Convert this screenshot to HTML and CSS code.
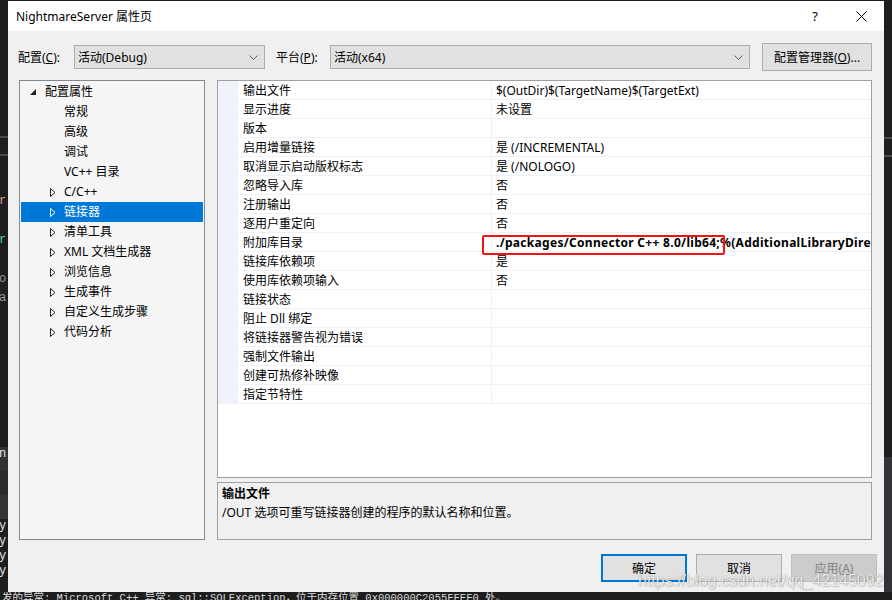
FILE: index.html
```html
<!DOCTYPE html>
<html>
<head>
<meta charset="utf-8">
<title>NightmareServer 属性页</title>
<link rel="stylesheet" href="styles.css">
</head>
<body>
<div class="screen">
  <div class="topline"></div>
  <div class="middle">
    <div class="edge">
      <div class="eb h136"></div>
      <div class="eline"></div>
      <div class="eb h16"></div>
      <div class="eline"></div>
      <div class="eb h38"></div>
      <div class="ech c-orange">r</div>
      <div class="eb h24"></div>
      <div class="ech c-teal">r</div>
      <div class="eb h24"></div>
      <div class="ech c-grey">o</div>
      <div class="eb h4"></div>
      <div class="ech c-grey">a</div>
      <div class="eb h141"></div>
      <div class="eband light"><span class="ech c-white">n</span></div>
      <div class="eband mid"></div>
      <div class="eband light"></div>
      <div class="ech c-white">y</div>
      <div class="ech c-white">y</div>
      <div class="ech c-white">y</div>
      <div class="ech c-white">y</div>
    </div>

    <div class="dialog">
      <div class="titlebar">
        <div class="title">NightmareServer 属性页</div>
        <div class="tb-btn help">?</div>
        <div class="tb-btn close">
          <svg width="11" height="11" viewBox="0 0 11 11"><path d="M0.5 0.5L10.5 10.5M10.5 0.5L0.5 10.5" stroke="#000" stroke-width="1" fill="none"/></svg>
        </div>
      </div>

      <div class="config">
        <div class="lbl lbl-conf">配置(<u>C</u>):</div>
        <div class="combo combo-conf">
          <span class="combo-text">活动(Debug)</span>
          <svg class="chev" width="9" height="5" viewBox="0 0 9 5"><path d="M0.5 0.5L4.5 4.5L8.5 0.5" stroke="#5a5a5a" fill="none"/></svg>
        </div>
        <div class="lbl lbl-plat">平台(<u>P</u>):</div>
        <div class="combo combo-plat">
          <span class="combo-text">活动(x64)</span>
          <svg class="chev" width="9" height="5" viewBox="0 0 9 5"><path d="M0.5 0.5L4.5 4.5L8.5 0.5" stroke="#5a5a5a" fill="none"/></svg>
        </div>
        <div class="btn btn-mgr">配置管理器(<u>O</u>)...</div>
      </div>

      <div class="main">
        <div class="tree">
          <div class="node lv0">
            <span class="exp"><svg width="6" height="6" viewBox="0 0 6 6"><polygon points="6,0 6,6 0,6" fill="#1e1e1e"/></svg></span>配置属性
          </div>
          <div class="node lv1"><span class="exp"></span>常规</div>
          <div class="node lv1"><span class="exp"></span>高级</div>
          <div class="node lv1"><span class="exp"></span>调试</div>
          <div class="node lv1"><span class="exp"></span>VC++ 目录</div>
          <div class="node lv1"><span class="exp"><svg class="tri" width="6" height="9" viewBox="0 0 6 9"><polygon points="0.5,0.5 5,4.5 0.5,8.5" fill="none" stroke="#1e1e1e"/></svg></span>C/C++</div>
          <div class="node lv1 sel"><span class="exp"><svg class="tri" width="6" height="9" viewBox="0 0 6 9"><polygon points="0.5,0.5 5,4.5 0.5,8.5" fill="none" stroke="#fff"/></svg></span>链接器</div>
          <div class="node lv1"><span class="exp"><svg class="tri" width="6" height="9" viewBox="0 0 6 9"><polygon points="0.5,0.5 5,4.5 0.5,8.5" fill="none" stroke="#1e1e1e"/></svg></span>清单工具</div>
          <div class="node lv1"><span class="exp"><svg class="tri" width="6" height="9" viewBox="0 0 6 9"><polygon points="0.5,0.5 5,4.5 0.5,8.5" fill="none" stroke="#1e1e1e"/></svg></span>XML 文档生成器</div>
          <div class="node lv1"><span class="exp"><svg class="tri" width="6" height="9" viewBox="0 0 6 9"><polygon points="0.5,0.5 5,4.5 0.5,8.5" fill="none" stroke="#1e1e1e"/></svg></span>浏览信息</div>
          <div class="node lv1"><span class="exp"><svg class="tri" width="6" height="9" viewBox="0 0 6 9"><polygon points="0.5,0.5 5,4.5 0.5,8.5" fill="none" stroke="#1e1e1e"/></svg></span>生成事件</div>
          <div class="node lv1"><span class="exp"><svg class="tri" width="6" height="9" viewBox="0 0 6 9"><polygon points="0.5,0.5 5,4.5 0.5,8.5" fill="none" stroke="#1e1e1e"/></svg></span>自定义生成步骤</div>
          <div class="node lv1"><span class="exp"><svg class="tri" width="6" height="9" viewBox="0 0 6 9"><polygon points="0.5,0.5 5,4.5 0.5,8.5" fill="none" stroke="#1e1e1e"/></svg></span>代码分析</div>
        </div>

        <div class="right">
          <div class="grid">
            <div class="row"><div class="gut"></div><div class="name">输出文件</div><div class="val">$(OutDir)$(TargetName)$(TargetExt)</div></div>
            <div class="row"><div class="gut"></div><div class="name">显示进度</div><div class="val">未设置</div></div>
            <div class="row"><div class="gut"></div><div class="name">版本</div><div class="val"></div></div>
            <div class="row"><div class="gut"></div><div class="name">启用增量链接</div><div class="val">是 (/INCREMENTAL)</div></div>
            <div class="row"><div class="gut"></div><div class="name">取消显示启动版权标志</div><div class="val">是 (/NOLOGO)</div></div>
            <div class="row"><div class="gut"></div><div class="name">忽略导入库</div><div class="val">否</div></div>
            <div class="row"><div class="gut"></div><div class="name">注册输出</div><div class="val">否</div></div>
            <div class="row"><div class="gut"></div><div class="name">逐用户重定向</div><div class="val">否</div></div>
            <div class="row"><div class="gut"></div><div class="name">附加库目录</div><div class="val bold">./packages/Connector C++ 8.0/lib64;%(AdditionalLibraryDirectories)</div><div class="redbox"></div></div>
            <div class="row"><div class="gut"></div><div class="name">链接库依赖项</div><div class="val">是</div></div>
            <div class="row"><div class="gut"></div><div class="name">使用库依赖项输入</div><div class="val">否</div></div>
            <div class="row"><div class="gut"></div><div class="name">链接状态</div><div class="val"></div></div>
            <div class="row"><div class="gut"></div><div class="name">阻止 Dll 绑定</div><div class="val"></div></div>
            <div class="row"><div class="gut"></div><div class="name">将链接器警告视为错误</div><div class="val"></div></div>
            <div class="row"><div class="gut"></div><div class="name">强制文件输出</div><div class="val"></div></div>
            <div class="row"><div class="gut"></div><div class="name">创建可热修补映像</div><div class="val"></div></div>
            <div class="row"><div class="gut"></div><div class="name">指定节特性</div><div class="val"></div></div>
          </div>
          <div class="desc">
            <div class="desc-title">输出文件</div>
            <div class="desc-text">/OUT 选项可重写链接器创建的程序的默认名称和位置。</div>
          </div>
        </div>
      </div>

      <div class="footer">
        <div class="btn btn-ok">确定</div>
        <div class="btn">取消</div>
        <div class="btn btn-dis">应用(<u>A</u>)</div>
      </div>

      <div class="watermark">https://blog.csdn.net/qq_42145092</div>
    </div>

    <div class="edge edge-r">
      <div class="eb h137"></div>
      <div class="eline"></div>
      <div class="eb h16"></div>
      <div class="eline"></div>
      <div class="eb h300"></div>
      <div class="eband light tall"></div>
    </div>
  </div>
  <div class="console">发的异常: Microsoft C++ 异常: sql::SQLException，位于内存位置 0x000000C2055FFEF0 处。</div>
</div>
</body>
</html>
```

FILE: styles.css
```css
* { box-sizing: border-box; margin: 0; padding: 0; }

html, body { width: 892px; height: 600px; overflow: hidden; }

body {
  background: #1e1e1e;
  font-family: "Segoe UI", "Noto Sans", "Noto Sans CJK SC", sans-serif;
  font-size: 12px;
  color: #000;
}

.screen { display: flex; flex-direction: column; height: 600px; }
.topline { height: 1px; background: #1e1e1e; flex: none; }
.middle { display: flex; height: 591px; flex: none; }

/* dark editor edges around the dialog */
.edge {
  width: 8px;
  flex: none;
  display: flex;
  flex-direction: column;
  overflow: hidden;
  background: #1e1e1e;
  font-family: "Liberation Mono", monospace;
  font-size: 12px;
  line-height: 15px;
}
.eb { flex: none; }
.h4 { height: 4px; }
.h16 { height: 16px; }
.h24 { height: 24px; }
.h38 { height: 38px; }
.h136 { height: 135px; }
.h137 { height: 136px; }
.h141 { height: 141px; }
.h300 { height: 300px; }
.eline { height: 2px; background: #4a4a4a; flex: none; }
.ech { height: 15px; flex: none; margin-left: -1px; }
.c-orange { color: #d69d85; }
.c-teal { color: #4ec9b0; }
.c-grey { color: #9a9a9a; }
.c-white { color: #e6e6e6; }
.eband { height: 24px; flex: none; }
.eband.light { background: #333337; }
.eband.mid { background: #2a2a2c; }
.eband.tall { height: 200px; }

/* dialog */
.dialog {
  width: 876px;
  flex: none;
  background: #f0f0f0;
  display: flex;
  flex-direction: column;
  position: relative;
}

.titlebar {
  height: 30px;
  flex: none;
  background: #fff;
  display: flex;
  align-items: center;
}
.title { flex: 1; padding: 2px 0 0 8px; font-size: 12px; line-height: 16px; }
.tb-btn {
  width: 46px;
  height: 30px;
  display: flex;
  align-items: center;
  justify-content: center;
  font-size: 13px;
}

.config {
  height: 49px;
  flex: none;
  padding: 3px 0 0 10px;
  display: flex;
  align-items: center;
}
.lbl { line-height: 16px; white-space: nowrap; padding-top: 1px; }
.lbl-conf { width: 56px; }
.lbl-plat { width: 54px; margin-left: 11px; }
.combo {
  height: 24px;
  background: #e1e1e1;
  border: 1px solid #adadad;
  display: flex;
  align-items: center;
  padding: 0 6px 0 3px;
}
.combo-text { flex: 1; line-height: 16px; padding-top: 1px; }
.combo-conf { width: 191px; }
.combo-plat { width: 420px; }
.chev { flex: none; }

.btn {
  height: 28px;
  width: 86px;
  background: #e1e1e1;
  border: 1px solid #adadad;
  display: flex;
  align-items: center;
  justify-content: center;
  line-height: 16px;
  padding-top: 1px;
  white-space: nowrap;
}
.btn-mgr { width: 110px; margin-left: 12px; }
.btn-ok { border: 2px solid #0078d7; }
.btn-dis { background: #cccccc; border-color: #bfbfbf; color: #838383; }

.main {
  height: 460px;
  flex: none;
  display: flex;
  gap: 12px;
  padding-left: 11px;
}

/* tree */
.tree {
  width: 186px;
  flex: none;
  background: #f5f5f5;
  border: 1px solid #828790;
  padding-top: 1px;
}
.node {
  height: 20px;
  margin: 0 1px;
  display: flex;
  align-items: center;
  line-height: 16px;
  white-space: nowrap;
}
.exp { display: flex; align-items: center; flex: none; }
.lv0 { padding-left: 9px; }
.lv0 .exp { width: 15px; }
.lv1 { padding-left: 29px; }
.lv1 .exp { width: 14px; }
.sel { background: #0078d7; color: #fff; }

/* right column */
.right {
  width: 655px;
  flex: none;
  display: flex;
  flex-direction: column;
  gap: 4px;
}
.grid {
  height: 398px;
  flex: none;
  background: #fff;
  border: 1px solid #a0a0a0;
  overflow: hidden;
}
.row {
  height: 19px;
  display: grid;
  grid-template-columns: 20px 253px 1fr;
  position: relative;
}
.gut { background: #f0f4fa; }
.name, .val {
  border-bottom: 1px solid #edf1f8;
  padding-top: 2px;
  line-height: 16px;
  white-space: nowrap;
  overflow: hidden;
}
.name { padding-left: 5px; }
.val { padding-left: 4px; border-left: 1px solid #edf1f8; }
.bold { font-weight: 700; letter-spacing: 0.3px; }
.redbox {
  position: absolute;
  left: 264px;
  top: 2px;
  width: 243px;
  height: 20px;
  border: 2.5px solid #f21414;
  border-radius: 2px;
  z-index: 2;
}

.desc {
  height: 58px;
  flex: none;
  border: 1px solid #a0a0a0;
  background: #f0f0f0;
  padding: 1px 0 0 4px;
  line-height: 19px;
}
.desc-title { font-weight: 700; }

.footer {
  height: 51px;
  flex: none;
  display: flex;
  justify-content: flex-end;
  gap: 9px;
  padding: 14px 7px 0 0;
}

.watermark {
  position: absolute;
  left: 630px;
  top: 570px;
  font-family: "Liberation Sans", Arial, sans-serif;
  font-size: 16px;
  line-height: 20px;
  color: rgba(255, 255, 255, 0.85);
  text-shadow: 0 0 1px rgba(0, 0, 0, 0.4), 1px 1px 1px rgba(0, 0, 0, 0.15);
  white-space: nowrap;
}

.console {
  height: 8px;
  flex: none;
  overflow: hidden;
  background: #1e1e1e;
  color: #dcdcdc;
  font-family: "Liberation Mono", "Noto Sans CJK SC", monospace;
  font-size: 10.5px;
  line-height: 13px;
  padding-left: 2px;
  white-space: nowrap;
}
```
